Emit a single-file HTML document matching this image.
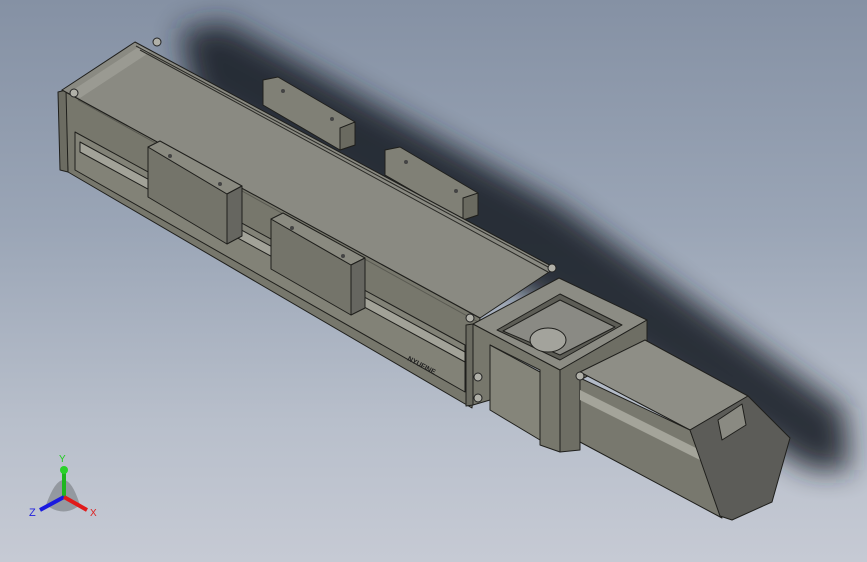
<!DOCTYPE html>
<html><head><style>
html,body{margin:0;padding:0;width:867px;height:562px;overflow:hidden}
body{background:linear-gradient(180deg,#8591a4 0%,#9aa5b6 40%,#b8bfcb 75%,#c6cad4 100%)}
svg{position:absolute;left:0;top:0}
</style></head><body>
<svg width="867" height="562" viewBox="0 0 867 562" xmlns="http://www.w3.org/2000/svg">
<defs>
<filter id="b" x="-20%" y="-20%" width="140%" height="140%"><feGaussianBlur stdDeviation="14"/></filter>
</defs>
<!-- shadow -->
<polygon points="180,30 225,22 560,205 845,410 850,470 810,470 540,300 195,100" fill="#1e222a" opacity="0.9" filter="url(#b)"/>
<g stroke="#1f1f1c" stroke-width="1" stroke-linejoin="round">
<!-- mounting plates -->
<polygon points="263,80 278,77 355,122 355,145 340,150 263,105" fill="#808076"/>
<polygon points="340,128 355,122 355,145 340,150" fill="#6a6a60"/>
<polygon points="385,150 400,147 478,193 478,215 463,220 385,175" fill="#808076"/>
<polygon points="463,198 478,193 478,215 463,220" fill="#6a6a60"/>
<!-- body front face -->
<polygon points="62,90 480,318 472,408 68,172" fill="#77776c"/>
<polygon points="75,132 465,345 465,392 75,170" fill="#828277"/>
<polygon points="80,142 465,352 465,362 80,152" fill="#a2a298"/>
<polygon points="58,92 66,90 68,172 60,170" fill="#6c6c62"/>
<!-- top face -->
<polygon points="62,90 135,42 555,268 480,318" fill="#8a8a82"/>
<polygon points="70,92 140,46 150,52 80,98" fill="#9a9a92" stroke="none"/>
<line x1="140" y1="50" x2="548" y2="272" stroke="#2a2a26"/>
<line x1="136" y1="46" x2="550" y2="268" stroke="#2a2a26"/>
<line x1="78" y1="100" x2="478" y2="322" stroke="#5a5a52"/>
<!-- carriage 1 -->
<polygon points="148,147 227,194 227,244 148,197" fill="#74746a"/>
<polygon points="148,147 160,141 242,186 227,194" fill="#8a8a80"/>
<polygon points="227,194 242,186 242,236 227,244" fill="#666660"/>
<!-- carriage 2 -->
<polygon points="271,219 351,265 351,315 271,269" fill="#74746a"/>
<polygon points="271,219 283,213 365,258 351,265" fill="#8a8a80"/>
<polygon points="351,265 365,258 365,308 351,315" fill="#666660"/>
<!-- mount front -->
<polygon points="473,324 560,370 560,452 540,445 540,370 490,345 490,400 473,405" fill="#77776c"/>
<polygon points="490,345 540,372 540,440 490,410" fill="#85857a"/>
<polygon points="466,325 473,324 473,405 466,406" fill="#6a6a60"/>
<!-- mount top -->
<polygon points="473,324 559,278 647,320 560,370" fill="#8c8c84"/>
<polygon points="497,330 560,294 622,325 560,360" fill="#5d5d56"/>
<polygon points="503,331 560,300 615,327 560,355" fill="#8a8a84"/>
<ellipse cx="548" cy="340" rx="18" ry="12" fill="#a3a39c"/>
<!-- flange -->
<polygon points="560,370 647,320 647,345 580,380 580,450 560,452" fill="#6e6e64"/>
<!-- motor -->
<polygon points="580,372 645,340 748,396 690,430" fill="#8e8e86"/>
<polygon points="580,378 690,430 722,518 580,442" fill="#78786e"/>
<polygon points="580,390 700,450 700,460 580,400" fill="#a4a49a" stroke="none"/>
<polygon points="690,430 748,396 790,438 772,502 732,520 720,516" fill="#5c5c58"/>
<polygon points="718,420 742,404 746,425 722,440" fill="#8a8a82"/>
</g>
<!-- screws -->
<g fill="#b0b0a8" stroke="#222" stroke-width="1">
<circle cx="157" cy="42" r="4"/><circle cx="74" cy="93" r="4"/>
<circle cx="552" cy="268" r="4"/><circle cx="470" cy="318" r="4"/>
<circle cx="478" cy="377" r="4"/><circle cx="478" cy="398" r="4"/>
<circle cx="580" cy="376" r="4"/>
</g>
<g fill="#444">
<circle cx="283" cy="91" r="2"/><circle cx="332" cy="119" r="2"/>
<circle cx="406" cy="162" r="2"/><circle cx="456" cy="191" r="2"/>
<circle cx="170" cy="156" r="2"/><circle cx="220" cy="184" r="2"/>
<circle cx="292" cy="228" r="2"/><circle cx="343" cy="256" r="2"/>
</g>
<text x="0" y="0" font-family="Liberation Sans,sans-serif" font-size="7" font-weight="bold" fill="#222" transform="translate(407,360) rotate(28)">NYUFINE</text>
<!-- axes -->
<g>
<path d="M46,505 Q64,455 80,505 Q64,518 46,505Z" fill="#707478" opacity="0.55"/>
<line x1="64" y1="497" x2="64" y2="470" stroke="#1fb51f" stroke-width="4"/>
<circle cx="64" cy="470" r="4" fill="#2ad12a"/>
<line x1="64" y1="497" x2="40" y2="510" stroke="#1a1ae0" stroke-width="4"/>
<line x1="64" y1="497" x2="87" y2="510" stroke="#e01a1a" stroke-width="4"/>
<text x="59" y="462" font-family="Liberation Sans,sans-serif" font-size="10" fill="#22cc22">Y</text>
<text x="29" y="516" font-family="Liberation Sans,sans-serif" font-size="11" fill="#2222dd">Z</text>
<text x="90" y="516" font-family="Liberation Sans,sans-serif" font-size="10" fill="#dd2222">X</text>
</g>
</svg>
</body></html>
